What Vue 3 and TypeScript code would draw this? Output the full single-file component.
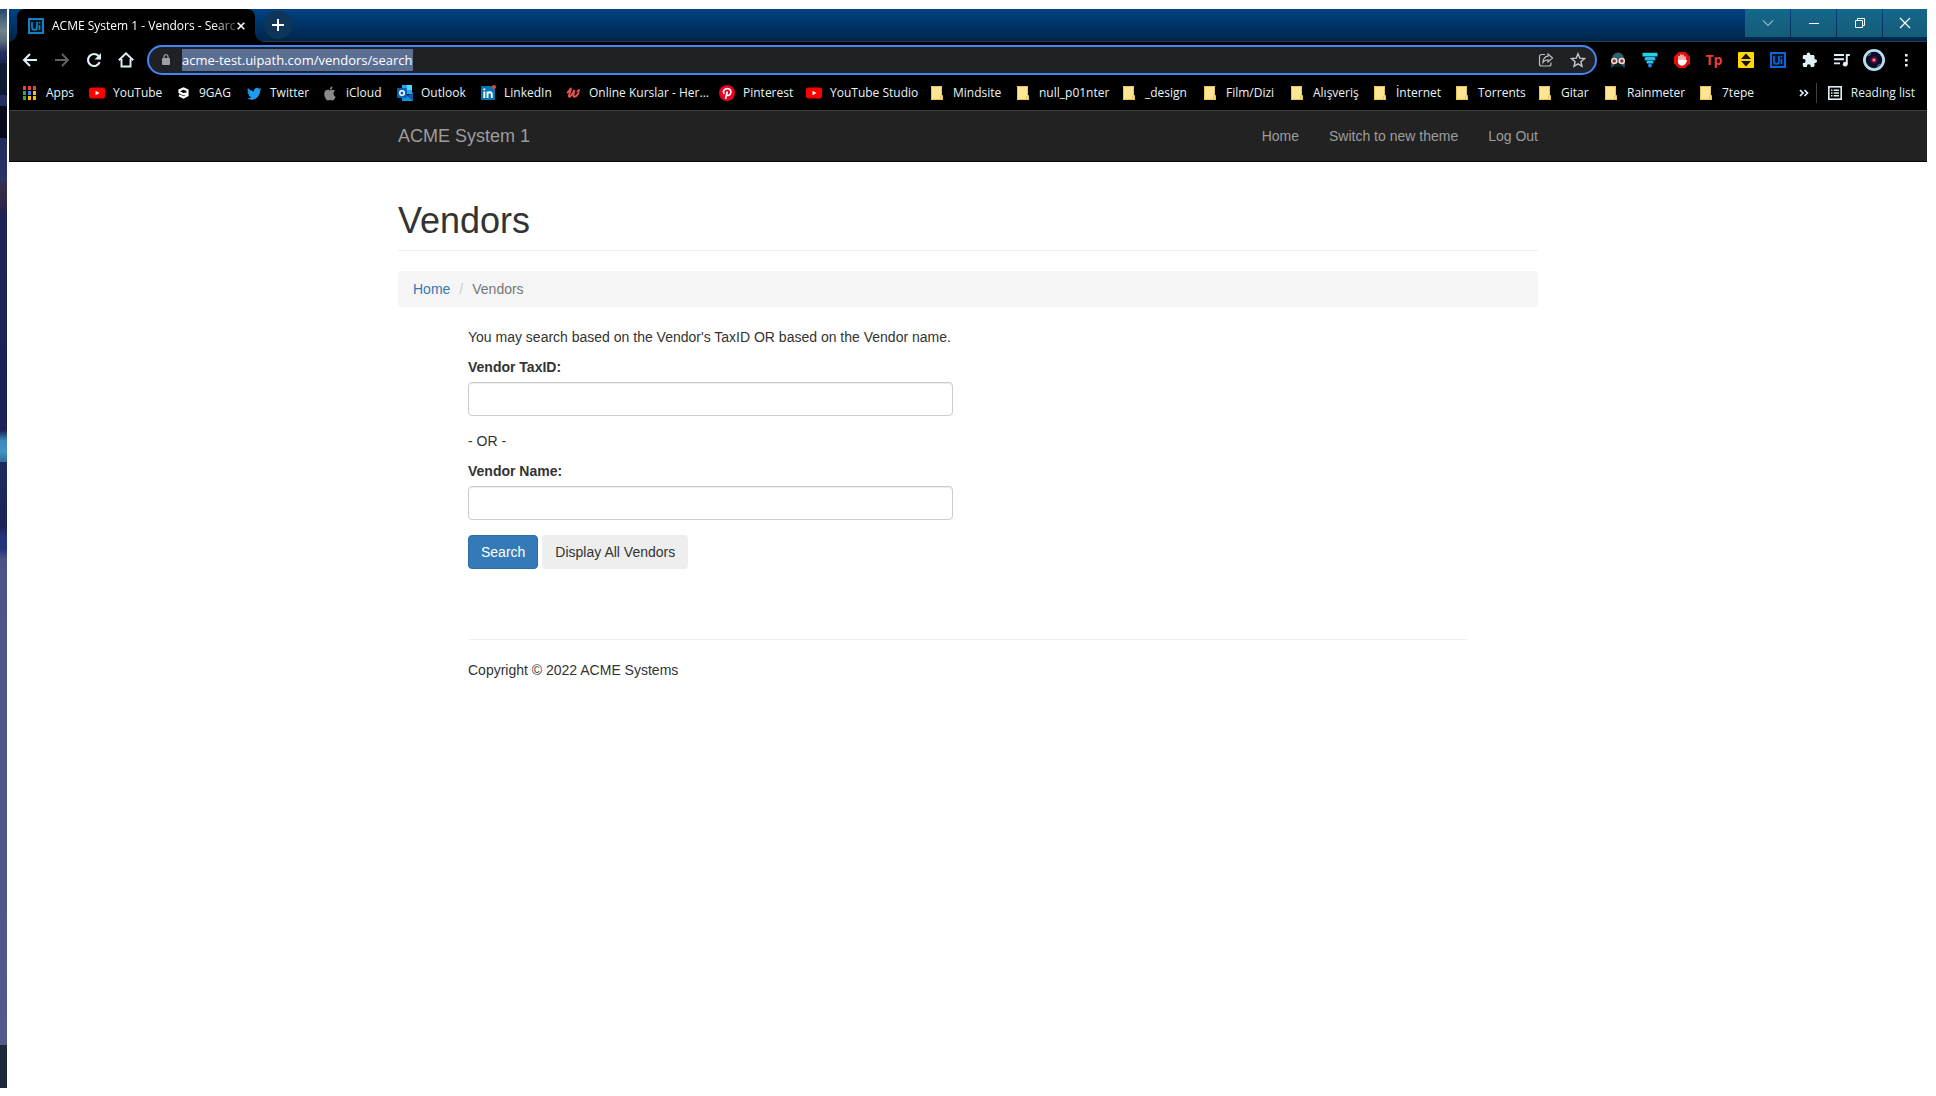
<script setup lang="ts">
import { onMounted, ref } from 'vue'

interface Bookmark {
  label: string
  icon: string
  width: number
}

const bookmarks: Bookmark[] = [
  { label: 'Apps', icon: 'apps', width: 67 },
  { label: 'YouTube', icon: 'youtube', width: 86 },
  { label: '9GAG', icon: 'ninegag', width: 71 },
  { label: 'Twitter', icon: 'twitter', width: 76 },
  { label: 'iCloud', icon: 'apple', width: 75 },
  { label: 'Outlook', icon: 'outlook', width: 83 },
  { label: 'LinkedIn', icon: 'linkedin', width: 85 },
  { label: 'Online Kurslar - Her...', icon: 'udemy', width: 154 },
  { label: 'Pinterest', icon: 'pinterest', width: 87 },
  { label: 'YouTube Studio', icon: 'youtube', width: 123 },
  { label: 'Mindsite', icon: 'folder', width: 86 },
  { label: 'null_p01nter', icon: 'folder', width: 106 },
  { label: '_design', icon: 'folder', width: 81 },
  { label: 'Film/Dizi', icon: 'folder', width: 87 },
  { label: 'Alışveriş', icon: 'folder', width: 83 },
  { label: 'İnternet', icon: 'folder', width: 82 },
  { label: 'Torrents', icon: 'folder', width: 83 },
  { label: 'Gitar', icon: 'folder', width: 66 },
  { label: 'Rainmeter', icon: 'folder', width: 95 },
  { label: '7tepe', icon: 'folder', width: 80 },
]

const appsDots = [
  '#ea4335', '#ea4335', '#ea4335',
  '#34a853', '#4285f4', '#fbbc04',
  '#34a853', '#fbbc04', '#fbbc04',
]

const address = ref('acme-test.uipath.com/vendors/search')
const addressField = ref<HTMLInputElement | null>(null)
const taxId = ref('')
const vendorName = ref('')

onMounted(() => {
  addressField.value?.focus()
  addressField.value?.select()
})
</script>

<template>
  <div class="desktop">
    <div class="wallpaper"></div>
    <div class="window">
      <header class="chrome">
        <div class="titlebar">
          <div class="tab">
            <svg class="i16" viewBox="0 0 16 16">
              <rect x="1" y="1" width="14" height="14" fill="#06121c" stroke="#0c83c4" stroke-width="2" />
              <path d="M4 4v5q0 3 2.500 3T9 9V4M11.500 7v5M11.500 4v1.500" fill="none" stroke="#0c83c4" stroke-width="1.700" />
            </svg>
            <span class="tab-title">ACME System 1 - Vendors - Searc</span>
            <button class="icon-btn" aria-label="Close tab">
              <svg width="8" height="8" viewBox="0 0 8 8"><path d="M.7.7l6.600 6.600M7.300.7L.7 7.300" stroke="#fff" stroke-width="1.600" /></svg>
            </button>
          </div>
          <button class="icon-btn new-tab" aria-label="New tab">
            <svg width="12" height="12" viewBox="0 0 12 12"><path d="M6 0v12M0 6h12" stroke="#fff" stroke-width="2" /></svg>
          </button>
          <div class="win-controls">
            <button class="win-btn" aria-label="Search tabs">
              <svg width="12" height="12" viewBox="0 0 12 12"><path d="M1 3.500l5 5 5-5" fill="none" stroke="#e6f2f6" /></svg>
            </button>
            <button class="win-btn" aria-label="Minimize">
              <svg width="12" height="12" viewBox="0 0 12 12"><path d="M1 6.500h10" stroke="#fff" /></svg>
            </button>
            <button class="win-btn" aria-label="Restore">
              <svg width="12" height="12" viewBox="0 0 12 12"><path d="M1.500 3.500h7v7h-7zM3.500 3V1.500h7v7H9" fill="none" stroke="#fff" /></svg>
            </button>
            <button class="win-btn" aria-label="Close">
              <svg width="12" height="12" viewBox="0 0 12 12"><path d="M1 1l10 10M11 1L1 11" stroke="#fff" stroke-width="1.200" /></svg>
            </button>
          </div>
        </div>

        <div class="toolbar">
          <div class="nav-buttons">
            <button class="icon-btn" aria-label="Back">
              <svg class="i16" viewBox="0 0 16 16"><path d="M15 8H2.500M8 2L2 8l6 6" fill="none" stroke="#dff1f6" stroke-width="2" /></svg>
            </button>
            <button class="icon-btn" aria-label="Forward">
              <svg class="i16" viewBox="0 0 16 16"><path d="M1 8h12.500M8 2l6 6-6 6" fill="none" stroke="#5f6368" stroke-width="1.800" /></svg>
            </button>
            <button class="icon-btn" aria-label="Reload">
              <svg class="i16" viewBox="0 0 16 16"><path d="M13.600 10.200A6 6 0 1 1 12.500 4" fill="none" stroke="#dff1f6" stroke-width="2.200" /><path d="M15 1v6.500H8.500z" fill="#dff1f6" /></svg>
            </button>
            <button class="icon-btn" aria-label="Home">
              <svg class="i16" viewBox="0 0 16 16"><path d="M.8 8.300L8 1.300l7.200 7M3.500 7v7.500h9V7" fill="none" stroke="#dff1f6" stroke-width="1.900" /></svg>
            </button>
          </div>
          <div class="omnibox">
            <svg class="lock" width="8" height="12" viewBox="0 0 8 12"><rect y="4" width="8" height="7" rx="1" fill="#9aa0a6" /><path d="M2 5V2.700a2 2 0 0 1 4 0V5" fill="none" stroke="#9aa0a6" stroke-width="1.200" /></svg>
            <input ref="addressField" v-model="address" class="address" type="text" aria-label="Address" spellcheck="false" />
            <button class="icon-btn" aria-label="Share">
              <svg class="i16" viewBox="0 0 16 16"><path d="M7 2.500H3.500a2 2 0 0 0-2 2v7.500a2 2 0 0 0 2 2h7.500a2 2 0 0 0 2-2v-1.500M10 2l4.500 4-4.500 4V7.800C7.500 7.800 6 9 5 10.500 5.200 7.500 6.800 4.500 10 4.200z" fill="none" stroke="#b9bdc1" stroke-width="1.200" /></svg>
            </button>
            <button class="icon-btn" aria-label="Bookmark this page">
              <svg class="i16" viewBox="0 0 16 16"><path d="M8 1.800l1.800 4.400 4.700.4-3.600 3.100 1.100 4.600L8 11.800l-4 2.500 1.100-4.600-3.600-3.100 4.700-.4z" fill="none" stroke="#c4c9cd" stroke-width="1.400" /></svg>
            </button>
          </div>
          <div class="extensions">
            <button class="icon-btn" aria-label="Incognito avatar extension">
              <svg class="i16" viewBox="0 0 16 16"><path d="M2 8V6.500a6 6 0 0 1 12 0V8l-1 6H3z" fill="#2f6070" /><path d="M4 11h8v4H4z" fill="#101b20" /><path d="M2 11v4.500M14 11v4.500" stroke="#3c6474" stroke-width="1.500" /><circle cx="4.200" cy="9" r="2.500" fill="#8c2f28" stroke="#f5dcd6" stroke-width="1.500" /><circle cx="11.800" cy="9" r="2.500" fill="#8c2f28" stroke="#f5dcd6" stroke-width="1.500" /></svg>
            </button>
            <button class="icon-btn" aria-label="Filter extension">
              <svg class="i16" viewBox="0 0 16 16"><path d="M.5.800h15v3.700H.5z" fill="#26d0e6" /><rect x="2.500" y="5" width="11" height="3.400" rx="1.500" fill="#2bb8e4" /><rect x="4.500" y="8.800" width="7" height="2.800" rx="1.200" fill="#31c1e4" /><circle cx="8" cy="13.500" r="2" fill="#1e88e5" /></svg>
            </button>
            <button class="icon-btn" aria-label="AdBlock">
              <svg class="i16" viewBox="0 0 16 16"><path d="M4.700 0h6.600L16 4.700v6.600L11.300 16H4.700L0 11.300V4.700z" fill="#e40d0d" /><path d="M5 9V4.500M7 8V3M9 8V3.200M11 9V4.800M4.500 8.500C4.500 12 6 13 8 13c2.500 0 3.500-2 4.300-4.200L11 8.500z" fill="#fff" stroke="#fff" stroke-width="1.300" stroke-linecap="round" /></svg>
            </button>
            <button class="icon-btn tp" aria-label="Tp extension">Tp</button>
            <button class="icon-btn" aria-label="Scroll extension">
              <svg class="i16" viewBox="0 0 16 16"><rect width="16" height="16" rx="1" fill="#ffd60a" /><path d="M8 1.500L13 7H3zM8 14.500L13 9H3z" fill="#111" /></svg>
            </button>
            <button class="icon-btn" aria-label="UiPath extension">
              <svg class="i16" viewBox="0 0 16 16"><rect x="1" y="1" width="14" height="14" fill="#05101f" stroke="#0a66dc" stroke-width="2" /><path d="M4 4v5q0 3 2.500 3T9 9V4M11.500 7v5M11.500 4v1.500" fill="none" stroke="#0a66dc" stroke-width="1.700" /></svg>
            </button>
            <button class="icon-btn" aria-label="Extensions">
              <svg class="i16" viewBox="0 0 16 16"><path d="M13.300 7.300h-.8V4.400c0-.8-.6-1.400-1.400-1.400H8.300v-.7a1.800 1.800 0 0 0-3.600 0V3H2.200C1.400 3 .8 3.600.8 4.400v2.700h.9a1.900 1.900 0 0 1 0 3.800H.8v2.700c0 .8.6 1.400 1.400 1.400h2.700v-.9a1.900 1.900 0 0 1 3.800 0v.9h2.400c.8 0 1.400-.6 1.400-1.400v-2.700h.8a1.800 1.800 0 0 0 0-3.600z" fill="#dff1f6" /></svg>
            </button>
            <button class="icon-btn" aria-label="Media controls">
              <svg class="i16" viewBox="0 0 16 16"><path d="M0 3h10M0 7.200h10M0 11.400h6" stroke="#dff1f6" stroke-width="1.900" /><path d="M12.800 12V3h3" fill="none" stroke="#dff1f6" stroke-width="1.900" /><circle cx="11.200" cy="12.200" r="2.400" fill="#dff1f6" /></svg>
            </button>
            <button class="icon-btn avatar" aria-label="Profile">
              <svg width="22" height="22" viewBox="0 0 22 22"><circle cx="11" cy="11" r="9.600" fill="#0b0d1c" stroke="#b5dcf5" stroke-width="2.800" /><path d="M5 7l3-2.500M14 17.500l3-2.500" stroke="#555b78" stroke-width="1.500" /><circle cx="11" cy="11" r="4.300" fill="#2a1040" /><circle cx="11" cy="11" r="2.200" fill="#e01e4c" /><circle cx="11" cy="11" r="0.900" fill="#ffd08a" /></svg>
            </button>
            <button class="icon-btn" aria-label="Menu">
              <svg class="i16" viewBox="0 0 16 16"><path d="M7 2h2.600v2.600H7zM7 7h2.600v2.600H7zM7 12h2.600v2.600H7z" fill="#dff1f6" /></svg>
            </button>
          </div>
        </div>

        <nav class="bookmarks" aria-label="Bookmarks">
          <a v-for="mark in bookmarks" :key="mark.label" class="bookmark" href="#" :style="{ flexBasis: mark.width + 'px' }">
            <svg class="i16" viewBox="0 0 16 16">
              <template v-if="mark.icon === 'apps'">
                <rect v-for="(color, i) in appsDots" :key="i" :x="1 + (i % 3) * 5" :y="1 + Math.floor(i / 3) * 5" width="3" height="4" :fill="color" />
              </template>
              <template v-else-if="mark.icon === 'youtube'">
                <rect y="2.500" width="16" height="11" rx="2.500" fill="#f00" />
                <path d="M6.500 5.700v4.600L10.500 8z" fill="#fff" />
              </template>
              <template v-else-if="mark.icon === 'ninegag'">
                <path d="M12.500 8.200L8.200 9.300 4.500 7.300V5.200L8.500 3.400l4 1.900v5L8.500 12.400 4 10.300" fill="none" stroke="#fff" stroke-width="2.200" />
              </template>
              <template v-else-if="mark.icon === 'twitter'">
                <path transform="translate(1 1) scale(.9)" d="M16 3.500c-.6.300-1.200.4-1.900.5.700-.4 1.200-1 1.400-1.800-.6.400-1.300.6-2.100.8A3.300 3.300 0 0 0 7.800 6 9.300 9.300 0 0 1 1.100 2.600a3.300 3.300 0 0 0 1 4.400c-.5 0-1-.2-1.500-.4 0 1.600 1.100 2.900 2.600 3.200-.5.100-1 .2-1.500.1.400 1.300 1.600 2.200 3.100 2.300A6.600 6.600 0 0 1 0 13.500 9.300 9.300 0 0 0 14.400 5.200c.6-.5 1.200-1 1.600-1.700z" fill="#1d9bf0" />
              </template>
              <template v-else-if="mark.icon === 'apple'">
                <path d="M11.500 8.500c0-1.600 1.300-2.300 1.400-2.400-.8-1.100-2-1.300-2.400-1.300-1-.1-2 .6-2.500.6S6.700 4.800 5.800 4.800C4.600 4.800 3.400 5.500 2.800 6.600 1.600 8.800 2.500 12 3.700 13.700c.6.900 1.300 1.800 2.200 1.800.9 0 1.200-.6 2.300-.6s1.400.6 2.300.6c.9 0 1.600-.9 2.100-1.700.7-1 1-1.900 1-2-.1 0-2.100-.8-2.100-3.300zM9.800 3.700c.5-.6.800-1.400.7-2.300-.7 0-1.500.5-2 1.100-.4.500-.8 1.300-.7 2.100.8.100 1.500-.3 2-.9z" fill="#8a8a8a" />
              </template>
              <template v-else-if="mark.icon === 'outlook'">
                <path d="M5 0h10v9H5z" fill="#28a8ea" /><path d="M10 0h5v5h-5z" fill="#50d9ff" /><path d="M5 7l6 4 5-4v9H5z" fill="#1490df" /><path d="M16 8v8l-6-5z" fill="#0a5ea8" />
                <rect y="3" width="10" height="10" rx="1" fill="#0364b8" /><circle cx="5" cy="8" r="2.300" fill="none" stroke="#fff" stroke-width="1.500" />
              </template>
              <template v-else-if="mark.icon === 'linkedin'">
                <rect x="1" y="1" width="14" height="14" rx="1" fill="#0077b5" />
                <path d="M4.300 6.500V13M4.300 3.500v1.800M7.500 13V6.500M7.500 13V9.500c0-3 4.300-3 4.300 0V13" fill="none" stroke="#fff" stroke-width="1.900" />
                <circle cx="14" cy="2" r="2" fill="#e8453c" />
              </template>
              <template v-else-if="mark.icon === 'udemy'">
                <path d="M2.500 7.500C4 6.500 5.500 3 6 3.500S3.500 10 4 11.500 7.500 9.500 9.500 5C8.500 8 8 11.500 9.200 11.800s2.500-1 3.500-2.800" fill="none" stroke="#ec5252" stroke-width="1.900" stroke-linecap="round" />
                <path d="M12 6.800C13 6 14 4.300 14.300 4.800S13.300 7.500 13.500 8.500" fill="none" stroke="#ec5252" stroke-width="1.400" stroke-linecap="round" />
              </template>
              <template v-else-if="mark.icon === 'pinterest'">
                <circle cx="8" cy="8" r="8" fill="#e60023" />
                <path d="M6.500 14L8.300 6.500M5.200 9C3.200 6 5.500 3.600 8.300 3.600c3.200 0 4.300 2.700 3.200 5-1 2.200-3.200 2.200-3.900 1" fill="none" stroke="#fff" stroke-width="1.700" />
              </template>
              <template v-else>
                <path d="M2 1h11v9.500h1V15H2z" fill="#ffe694" /><path d="M2.500 1.500h10v9M13.500 10.500v4h-11V1.500M11.500 14.500v-3.500h2" fill="none" stroke="#e8c55a" />
              </template>
            </svg>
            <span>{{ mark.label }}</span>
          </a>
          <button class="icon-btn more" aria-label="More bookmarks">
            <svg width="10" height="8" viewBox="0 0 10 8"><path d="M1 1l3 3-3 3M5.500 1l3 3-3 3" fill="none" stroke="#dff1f6" stroke-width="1.700" /></svg>
          </button>
          <button class="icon-btn reading">
            <svg class="i16" viewBox="0 0 16 16"><rect x="1.800" y="1.800" width="12.400" height="12.400" fill="none" stroke="#dff1f6" stroke-width="1.600" /><path d="M4 5.200h1.500M4 8h1.500M4 10.800h1.500M6.700 5.200H12M6.700 8H12M6.700 10.800H12" stroke="#dff1f6" stroke-width="1.500" /></svg>
            <span>Reading list</span>
          </button>
        </nav>
      </header>

      <div class="page">
        <nav class="navbar" aria-label="Main">
          <div class="container navbar-inner">
            <a class="brand" href="#">ACME System 1</a>
            <div class="nav-links">
              <a href="#">Home</a>
              <a href="#">Switch to new theme</a>
              <a href="#">Log Out</a>
            </div>
          </div>
        </nav>

        <main class="container">
          <h1>Vendors</h1>
          <ol class="breadcrumb">
            <li><a href="#">Home</a></li>
            <li class="active">Vendors</li>
          </ol>
          <div class="body-content">
            <form @submit.prevent>
              <p>You may search based on the Vendor's TaxID OR based on the Vendor name.</p>
              <div class="form-group">
                <label for="tax-id">Vendor TaxID:</label>
                <input id="tax-id" v-model="taxId" type="text" />
              </div>
              <p>- OR -</p>
              <div class="form-group">
                <label for="vendor-name">Vendor Name:</label>
                <input id="vendor-name" v-model="vendorName" type="text" />
              </div>
              <div class="actions">
                <button class="btn primary" type="submit">Search</button>
                <button class="btn" type="button">Display All Vendors</button>
              </div>
            </form>
            <footer>
              <p>Copyright © 2022 ACME Systems</p>
            </footer>
          </div>
        </main>
      </div>
    </div>
  </div>
</template>

<style>
body {
  background: #fff;
}
</style>

<style scoped>
* {
  box-sizing: border-box;
}

.desktop {
  display: flex;
  gap: 2px;
  min-height: 100vh;
  padding: 9px 9px 8px 0;
  font-family: "Liberation Sans", Arial, sans-serif;
  font-size: 14px;
  line-height: 20px;
  color: #333;
}

.wallpaper {
  flex: none;
  width: 7px;
  background: linear-gradient(
    #26466b 0%, #4a6a80 1%, #71858c 2%, #5a6c78 3%, #252f62 4%, #1b2350 5%, #101a33 5%, #0c1a30 8%,
    #232d60 8%, #232d60 9%, #080a1c 9%, #060818 12%, #222c5c 12%, #2a3468 16%, #3a2c4c 16%, #33284a 18%,
    #1d2257 19%, #1b2057 39%, #3c86b8 40%, #4395c4 41%, #2f6c9c 42%, #1e2a5c 42%, #1b2358 48%,
    #24347a 49%, #24347a 50%, #4a5288 51%, #4d5588 60%, #4d5488 80%, #525a8c 96%, #20263a 96%, #20263a 100%
  );
}

.window {
  flex: 1;
  min-width: 0;
}

.chrome {
  background: #000;
  border-bottom: 1px solid #3c4043;
  font-family: "Open Sans", "Noto Sans", sans-serif;
  font-size: 12px;
  color: #dff1f6;
}

.i16 {
  display: block;
  flex: none;
  width: 16px;
  height: 16px;
}

.icon-btn {
  display: flex;
  flex: none;
  align-items: center;
  justify-content: center;
  padding: 0;
  border: 0;
  background: none;
  color: inherit;
  font: inherit;
}

.titlebar {
  display: flex;
  height: 33px;
  padding-left: 8px;
  border-bottom: 1px solid #2f3d4a;
  background: linear-gradient(#004283, #00254a);
}

.tab {
  position: relative;
  display: flex;
  align-items: center;
  gap: 2px;
  width: 238px;
  height: 33px;
  padding: 0 11px;
  border-radius: 8px 8px 0 0;
  background: #000;
  color: #fff;
}

.tab::before,
.tab::after {
  content: "";
  position: absolute;
  bottom: 0;
  width: 8px;
  height: 8px;
}

.tab::before {
  right: 100%;
  background: radial-gradient(circle at 0 0, transparent 7px, #000 8px);
}

.tab::after {
  left: 100%;
  background: radial-gradient(circle at 100% 0, transparent 7px, #000 8px);
}

.tab-title {
  flex: 1;
  padding-left: 6px;
  white-space: nowrap;
  mask-image: linear-gradient(90deg, #000 88%, rgba(0, 0, 0, 0.3));
}

.new-tab {
  width: 28px;
  height: 28px;
  margin: 2px 0 0 9px;
  border-radius: 50%;
  background: #0d3557;
}

.win-controls {
  display: flex;
  gap: 1px;
  height: 28px;
  margin-left: auto;
}

.win-btn {
  display: flex;
  align-items: center;
  justify-content: center;
  width: 45px;
  padding: 0;
  border: 0;
  background: linear-gradient(#15678c, #155c78);
}

.win-btn:last-child {
  width: 44px;
}

.toolbar {
  display: flex;
  align-items: center;
  height: 36px;
  padding: 0 13px;
}

.nav-buttons {
  display: flex;
  gap: 16px;
  margin-right: 13px;
}

.omnibox {
  display: flex;
  flex: 1;
  align-items: center;
  gap: 16px;
  height: 30px;
  padding: 0 9px 0 13px;
  border: 2px solid #4285f4;
  border-radius: 15px;
  background: #202124;
}

.lock {
  flex: none;
  margin-right: -4px;
}

.address {
  flex: 1;
  min-width: 0;
  height: 22px;
  padding: 0;
  border: 0;
  outline: 0;
  background: none;
  color: #fff;
  font: 13px/22px "Open Sans", "Noto Sans", sans-serif;
}

.address::selection {
  background: rgba(91, 112, 147, 0.99);
  color: #fff;
}

.extensions {
  display: flex;
  align-items: center;
  gap: 16px;
  margin-left: 13px;
}

.tp {
  width: 16px;
  color: #ef3b36;
  font-size: 14px;
  font-weight: 700;
}

.avatar {
  margin: 0 -3px;
}

.bookmarks {
  display: flex;
  align-items: center;
  height: 32px;
  padding: 0 12px 2px 13px;
  white-space: nowrap;
}

.bookmark {
  display: flex;
  flex: none;
  align-items: center;
  gap: 8px;
  color: #e8f4f8;
  text-decoration: none;
}

.more {
  width: 24px;
  margin-left: auto;
}

.reading {
  gap: 8px;
  padding-left: 10px;
  border-left: 1px solid #3c4043;
}

.navbar {
  border-bottom: 1px solid #080808;
  background: #222;
}

.container {
  width: 100%;
  max-width: 1170px;
  margin: 0 auto;
  padding: 0 15px;
}

.navbar-inner {
  display: flex;
  align-items: center;
  justify-content: space-between;
  height: 50px;
}

.navbar a {
  color: #9d9d9d;
  text-decoration: none;
}

.brand {
  font-size: 18px;
}

.nav-links {
  display: flex;
  gap: 30px;
}

h1 {
  margin: 39px 0 20px;
  padding-bottom: 9px;
  border-bottom: 1px solid #eee;
  font-size: 36px;
  font-weight: 400;
  line-height: 40px;
}

.breadcrumb {
  display: flex;
  margin: 0 0 20px;
  padding: 8px 15px;
  border-radius: 4px;
  background: #f5f5f5;
  list-style: none;
}

.breadcrumb a {
  color: #337ab7;
  text-decoration: none;
}

.active {
  color: #777;
}

.active::before {
  content: "/";
  padding: 0 9px;
  color: #ccc;
}

.body-content {
  padding: 0 70px;
}

p {
  margin: 0 0 10px;
}

.form-group {
  display: grid;
  gap: 5px;
  width: calc(50% - 15px);
  margin-bottom: 15px;
}

label {
  font-weight: 700;
}

.form-group input {
  width: 100%;
  height: 34px;
  padding: 6px 12px;
  border: 1px solid #ccc;
  border-radius: 4px;
  background: #fff;
  box-shadow: inset 0 1px 1px rgba(0, 0, 0, 0.075);
  font: inherit;
}

.actions {
  display: flex;
  gap: 4px;
}

.btn {
  padding: 6px 12px;
  border: 1px solid #eee;
  border-radius: 4px;
  background: #eee;
  color: #333;
  font: inherit;
}

.primary {
  border-color: #2e6da4;
  background: #337ab7;
  color: #fff;
}

footer {
  margin-top: 70px;
  padding-top: 20px;
  border-top: 1px solid #eee;
}
</style>
